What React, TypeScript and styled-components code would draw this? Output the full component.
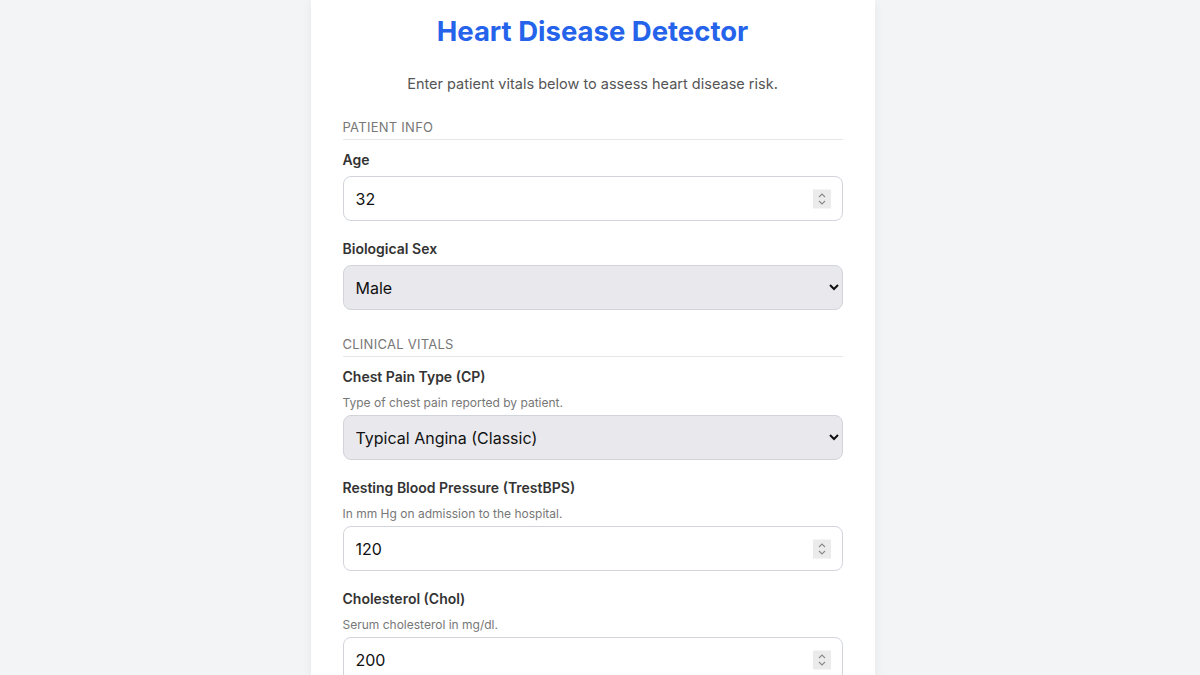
import React from "react";
import styled, { createGlobalStyle } from "styled-components";

const GlobalStyle = createGlobalStyle`
  html, body {
    margin: 0;
    padding: 0;
    background: #f3f4f6;
    font-family: Inter, "Noto Sans", "Liberation Sans", sans-serif;
    color: #333;
  }
`;

const Page = styled.div`
  display: flex;
  justify-content: center;
  padding-right: 15px;
`;

const Card = styled.div`
  width: 500px;
  background: #fff;
  padding: 10px 32px 32px;
  box-shadow: 0 2px 10px rgba(0, 0, 0, 0.06);
`;

const Title = styled.h1`
  margin: 0;
  text-align: center;
  color: #2563eb;
  font-size: 27.5px;
  font-weight: 700;
  line-height: 42px;
`;

const Subtitle = styled.p`
  margin: 22px 0 24px;
  text-align: center;
  color: #555;
  font-size: 14.5px;
  line-height: 20px;
`;

const SectionTitle = styled.h2<{ $first?: boolean }>`
  margin: ${(p) => (p.$first ? "0" : "25px")} 0 10px;
  padding-bottom: 3px;
  border-bottom: 1px solid #e5e7eb;
  color: #777;
  font-size: 13px;
  font-weight: 400;
  text-transform: uppercase;
  letter-spacing: 0.02em;
  line-height: 18px;
`;

const Field = styled.div`
  display: flex;
  flex-direction: column;
  margin-bottom: 18px;
`;

const Label = styled.label`
  font-size: 14px;
  font-weight: 600;
  color: #333;
  line-height: 20px;
  margin-bottom: 6px;
`;

const Hint = styled.span`
  font-size: 12px;
  color: #777;
  line-height: 16px;
  margin: 2px 0 4px;
`;

const InputWrap = styled.div`
  position: relative;
`;

const Input = styled.input`
  box-sizing: border-box;
  width: 100%;
  height: 45px;
  padding: 0 40px 0 12px;
  border: 1px solid #d1d5db;
  border-radius: 8px;
  font-family: inherit;
  font-size: 16px;
  color: #111;
  background: #fff;

  &::-webkit-inner-spin-button,
  &::-webkit-outer-spin-button {
    -webkit-appearance: none;
    margin: 0;
  }
`;

// native spin buttons don't render in the headless shot, so draw them
const Spinner = styled.span`
  position: absolute;
  right: 12px;
  top: 50%;
  transform: translateY(-50%);
  width: 18px;
  height: 19px;
  background: #ebebeb;
  display: flex;
  align-items: center;
  justify-content: center;
  pointer-events: none;
`;

const Select = styled.select`
  box-sizing: border-box;
  width: 100%;
  height: 45px;
  padding: 0 8px;
  border: 1px solid #d1d5db;
  border-radius: 8px;
  font-family: inherit;
  font-size: 16px;
  color: #111;
  background: #e9e9ed;
`;

function NumberInput({ value }: { value: number }) {
  return (
    <InputWrap>
      <Input type="number" defaultValue={value} />
      <Spinner>
        <svg width="8" height="13" viewBox="0 0 8 13" fill="none" stroke="#8a8a8a" strokeWidth="1.1">
          <path d="M1 4.5 L4 1.5 L7 4.5" />
          <path d="M1 8.5 L4 11.5 L7 8.5" />
        </svg>
      </Spinner>
    </InputWrap>
  );
}

export default function App() {
  return (
    <Page>
      <GlobalStyle />
      <Card>
        <Title>Heart Disease Detector</Title>
        <Subtitle>Enter patient vitals below to assess heart disease risk.</Subtitle>

        <SectionTitle $first>Patient Info</SectionTitle>
        <Field>
          <Label>Age</Label>
          <NumberInput value={32} />
        </Field>
        <Field>
          <Label>Biological Sex</Label>
          <Select defaultValue="1">
            <option value="1">Male</option>
            <option value="0">Female</option>
          </Select>
        </Field>

        <SectionTitle>Clinical Vitals</SectionTitle>
        <Field>
          <Label>Chest Pain Type (CP)</Label>
          <Hint>Type of chest pain reported by patient.</Hint>
          <Select defaultValue="0">
            <option value="0">Typical Angina (Classic)</option>
            <option value="1">Atypical Angina</option>
            <option value="2">Non-anginal Pain</option>
            <option value="3">Asymptomatic</option>
          </Select>
        </Field>
        <Field>
          <Label>Resting Blood Pressure (TrestBPS)</Label>
          <Hint>In mm Hg on admission to the hospital.</Hint>
          <NumberInput value={120} />
        </Field>
        <Field>
          <Label>Cholesterol (Chol)</Label>
          <Hint>Serum cholesterol in mg/dl.</Hint>
          <NumberInput value={200} />
        </Field>
      </Card>
    </Page>
  );
}
